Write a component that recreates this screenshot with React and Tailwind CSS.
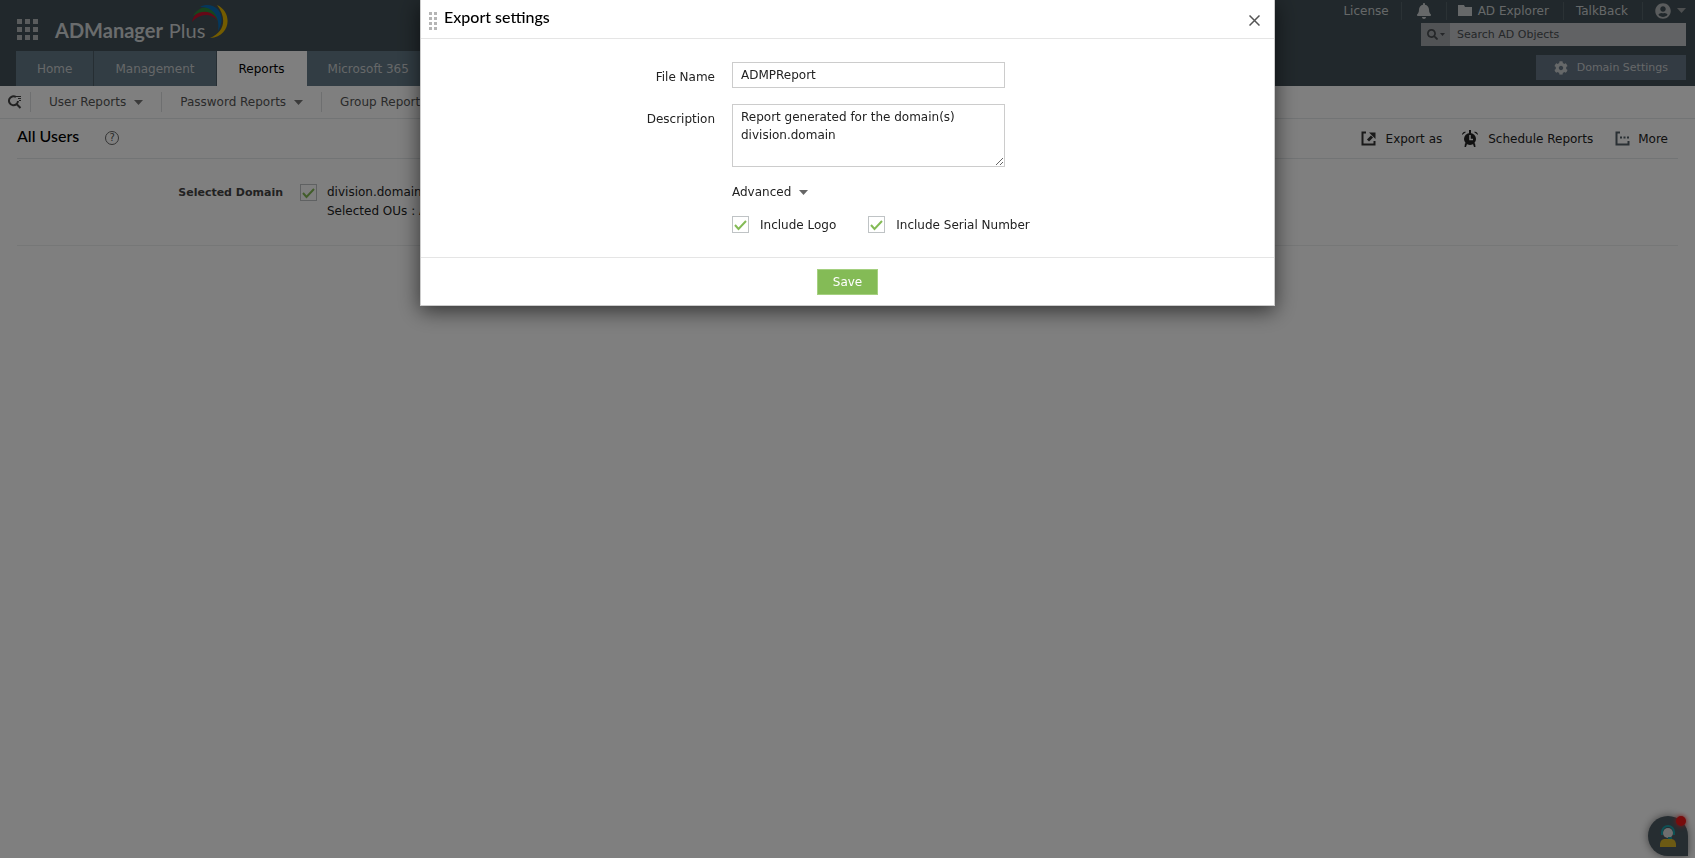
import { FaBell, FaSearch, FaCog, FaUserCircle } from 'react-icons/fa';

const Caret = ({ className }) => (
	<svg width="9" height="5" viewBox="0 0 9 5" className={className} fill="currentColor">
		<path d="M0 0h9L4.5 5z" />
	</svg>
);

const Check = ({ id, label }) => (
	<span className="relative inline-flex size-[17px] shrink-0">
		<input
			id={id}
			type="checkbox"
			aria-label={label}
			defaultChecked
			className="peer size-[17px] appearance-none border border-[#bfc3c5] bg-white"
		/>
		<svg
			viewBox="0 0 17 17"
			className="pointer-events-none absolute inset-0 hidden peer-checked:block"
			fill="none"
			stroke="#84bb56"
			strokeWidth="2"
		>
			<path d="M3 9l3.5 4L14 5" />
		</svg>
	</span>
);

const Logo = () => (
	<a href="#" className="relative flex items-center font-[Lato,sans-serif] text-[20px] leading-6 text-[#d4d8da]">
		<span className="font-bold">ADManager</span>
		<span className="ml-1.5">Plus</span>
		<svg width="37" height="35" viewBox="0 0 37 35" className="absolute -top-3.5 left-[137px]">
			<path d="M0 18C3 4 19 3 26 17 19 9 8 9 0 18z" fill="#c8102e" />
			<path d="M1 12C8-1 27 0 27 19 22 6 11 5 1 12z" fill="#2e8b3d" />
			<path d="M8 3C20-4 37 8 26 27 28 13 22 3 8 3z" fill="#0a6fb8" />
			<path d="M25 1c16 7 14 32-7 33C33 28 35 14 25 1z" fill="#e8b800" />
		</svg>
	</a>
);

const tabs = ['Home', 'Management', 'Reports', 'Microsoft 365'];
const menus = ['User Reports', 'Password Reports', 'Group Reports'];

const Header = () => (
	<header className="flex h-[86px] justify-between bg-[#435158] text-[#ccd0d2]">
		<div className="flex flex-col justify-between pl-4">
			<div className="flex h-[51px] items-center gap-[17px] pt-2">
				<button aria-label="Apps" className="ml-px grid grid-cols-3 gap-[3px]">
					{[...Array(9)].map((_, i) => (
						<i key={i} className="size-[5px] bg-[#b4b8ba]" />
					))}
				</button>
				<Logo />
			</div>
			<nav className="flex h-[35px]">
				{tabs.map((t) => (
					<a
						key={t}
						href="#"
						className={
							t === 'Reports'
								? 'flex items-center bg-white px-[22px] text-black'
								: 'flex items-center border-r border-[#4c5d67] bg-[#647a88] px-[21px]'
						}
					>
						{t}
					</a>
				))}
			</nav>
		</div>
		<div className="flex flex-col items-end pr-[9px]">
			<div className="flex h-[23px] items-center pb-0.5">
				<a href="#" className="px-3">License</a>
				<button aria-label="Notifications" className="flex h-[18px] items-center border-l border-[#56646b] px-3.5">
					<FaBell size={16} />
				</button>
				<a href="#" className="flex h-[18px] items-center gap-1.5 border-l border-[#56646b] pr-3.5 pl-[11px]">
					<svg width="14" height="11" viewBox="0 0 14 11" fill="currentColor">
						<path d="M0 0h6l1 2h7v1H0zM0 3h14v8H0z" />
					</svg>
					AD Explorer
				</a>
				<a href="#" className="flex h-[18px] items-center border-l border-[#56646b] pr-3.5 pl-3">TalkBack</a>
				<button aria-label="Account" className="flex h-[18px] items-center gap-1.5 border-l border-[#56646b] pl-3">
					<FaUserCircle size={16} className="text-[#b4b8ba]" />
					<Caret className="text-[#9a9ea0]" />
				</button>
			</div>
			<div className="flex h-[23px] w-[265px] text-[#4a4e52]">
				<button aria-label="Search in" className="flex w-[29px] items-center justify-center gap-0.5 bg-[#a2a6aa]">
					<FaSearch size={11} />
					<svg width="5" height="3" viewBox="0 0 5 3" fill="currentColor"><path d="M0 0h5L2.5 3z" /></svg>
				</button>
				<input
					aria-label="Search AD Objects"
					placeholder="Search AD Objects"
					className="min-w-0 flex-1 bg-[#c2c5c8] px-[7px] text-[11px] placeholder:text-[#4a4e52]"
				/>
			</div>
			<button className="mt-[9px] flex h-[25px] items-center gap-[9px] bg-[#667686] px-[18px] text-[11px]">
				<FaCog size={14} />
				Domain Settings
			</button>
		</div>
	</header>
);

const ReportPage = () => (
	<main>
		<nav className="flex h-[33px] items-center border-b border-[#e4e8ea] text-[#555]">
			<button aria-label="Search reports" className="flex w-[30px] justify-center">
				<svg width="14" height="14" viewBox="0 0 14 14" fill="none" stroke="#444" strokeWidth="2">
					<path d="M8 2a4.500 4.500 0 1 0 2 4M8.500 9l4 4" />
					<path d="M8 1.500h5M10 3.500h3M11 5.500h2" strokeWidth="1" />
				</svg>
			</button>
			{menus.map((m) => (
				<button key={m} className="flex h-5 items-center gap-2 border-l border-[#dcdfe0] px-[18px]">
					{m}
					<Caret className="text-[#777]" />
				</button>
			))}
		</nav>
		<div className="mx-[17px] flex h-10 items-center border-b border-[#e4e8ea]">
			<h1 className="pb-1.5 font-[Lato,sans-serif] text-[16px] font-medium text-black">All Users</h1>
			<button
				aria-label="Help"
				className="mb-0.5 ml-[26px] flex size-[14px] items-center justify-center rounded-full border border-[#666] text-[10px] text-[#555]"
			>
				?
			</button>
			<div className="ml-auto flex items-center pr-[10px]">
				<button className="flex items-center gap-[10px]">
					<svg width="15" height="15" viewBox="0 0 15 15" fill="none" stroke="#333" strokeWidth="2">
						<path d="M5 1.500H1.500v12h12V10" />
						<path d="M7 9.500l4-4" strokeWidth="3" />
						<path d="M8 1.500h6.500V8z" fill="#333" stroke="none" />
					</svg>
					Export as
				</button>
				<button className="ml-5 flex items-center gap-[10px]">
					<svg width="16" height="17" viewBox="0 0 16 17" fill="#222">
						<circle cx="8" cy="9" r="6" />
						<path d="M7 0h2v4H7zM0 5c0-2 2-4 4-3zM16 5c0-2-2-4-4-3zM3 13l2 1-1 3H2.500zM13 13l-2 1 1 3h1.500z" />
						<path d="M8 5v4.500h3" fill="none" stroke="#fff" strokeWidth="1.500" />
					</svg>
					Schedule Reports
				</button>
				<button className="ml-[22px] flex items-center gap-2">
					<svg width="15" height="15" viewBox="0 0 15 15" fill="none" stroke="#556068" strokeWidth="2">
						<path d="M5 1.500H1.500v12h12V10" />
						<path d="M5 6.500h2M8.500 6.500h2M12 6.500h2" />
					</svg>
					More
				</button>
			</div>
		</div>
		<section className="mx-[17px] flex h-[87px] items-start border-b border-[#eceeef] pt-6 leading-[19px]">
			<span className="w-[266px] text-right text-[11px] font-bold text-[#444]">Selected Domain</span>
			<div className="ml-[17px] flex pt-px">
				<Check label="division.domain" />
			</div>
			<div className="ml-[10px]">
				<p>division.domain</p>
				<p className="whitespace-nowrap">Selected OUs : All</p>
			</div>
		</section>
	</main>
);

const ExportDialog = () => (
	<div
		role="dialog"
		aria-label="Export settings"
		className="w-[855px] max-w-full self-start border border-t-0 border-[#ccc] bg-white shadow-[0_5px_20px_rgba(0,0,0,0.6)]"
	>
		<div className="flex h-[39px] items-center border-b border-[#e5e5e5] pr-3.5 pl-2">
			<div className="mt-1 grid grid-cols-2 gap-0.5">
				{[...Array(8)].map((_, i) => (
					<i key={i} className="size-[3px] bg-[#b5b5b5]" />
				))}
			</div>
			<h2 className="ml-[7px] pb-1 font-[Lato,sans-serif] text-[16px] font-medium text-black">Export settings</h2>
			<button aria-label="Close" className="mt-0.5 ml-auto">
				<svg width="11" height="11" viewBox="0 0 11 11" stroke="#555" strokeWidth="1.500">
					<path d="M.5.5l10 10M10.500.5l-10 10" />
				</svg>
			</button>
		</div>
		<form className="grid h-[218px] grid-cols-[294px_1fr] content-start gap-x-[17px] pt-[23px]">
			<label htmlFor="file" className="pt-[7px] text-right">File Name</label>
			<input id="file" defaultValue="ADMPReport" className="h-[26px] w-[273px] border border-[#ccc] px-2" />
			<label htmlFor="desc" className="mt-4 pt-[7px] text-right">Description</label>
			<textarea
				id="desc"
				defaultValue={'Report generated for the domain(s) division.domain'}
				className="mt-4 h-[63px] w-[273px] border border-[#ccc] px-2 pt-[3px] leading-[18px]"
			/>
			<button type="button" className="col-start-2 mt-[17px] flex items-center gap-2 justify-self-start">
				Advanced
				<Caret className="text-[#666]" />
			</button>
			<div className="col-start-2 mt-4 flex items-center">
				<Check id="logo" />
				<label htmlFor="logo" className="ml-[11px]">Include Logo</label>
				<span className="ml-8 flex">
					<Check id="serial" />
				</span>
				<label htmlFor="serial" className="ml-[11px]">Include Serial Number</label>
			</div>
		</form>
		<div className="flex h-12 items-center justify-center border-t border-[#e5e5e5]">
			<button className="h-[26px] border border-[#a5d080] bg-[#84bb56] px-[15px] text-white">Save</button>
		</div>
	</div>
);

const ChatButton = () => (
	<button
		aria-label="Chat"
		className="fixed right-[7px] bottom-0.5 flex size-10 items-center justify-center rounded-full rounded-br-md bg-[#4c5a62] shadow-[0_0_8px_rgba(0,0,0,0.5)]"
	>
		<svg width="20" height="26" viewBox="0 0 20 26">
			<circle cx="10" cy="10" r="5" fill="#ddd" />
			<path d="M4 12V9a6 6 0 0 1 12 0v3M10 15h4" fill="none" stroke="#1ba0a8" strokeWidth="2" />
			<path d="M2 24v-2c0-4 2-6 5-6h6c3 0 5 2 5 6v2z" fill="#d8b428" />
		</svg>
		<i className="absolute top-0 right-0.5 size-2.5 rounded-full bg-[#f01818] shadow-[0_0_5px_#ff3030]" />
	</button>
);

export default function App() {
	return (
		<div className="min-h-screen bg-white font-['DejaVu_Sans',sans-serif] text-[12px] leading-4 text-[#222]">
			<Header />
			<ReportPage />
			<ChatButton />
			<div className="fixed inset-0 flex justify-center bg-black/50">
				<ExportDialog />
			</div>
		</div>
	);
}
